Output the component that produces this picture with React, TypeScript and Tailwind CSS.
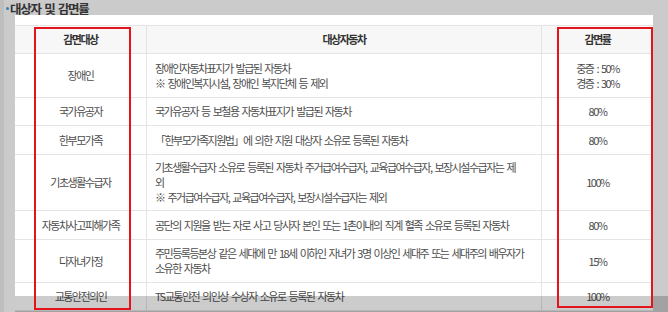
const rows: { target: string; car: string[]; rate: string[]; h: string }[] = [
  {
    target: "장애인",
    car: ["장애인자동차표지가 발급된 자동차", "※ 장애인복지시설, 장애인 복지단체 등 제외"],
    rate: ["중증 : 50%", "경증 : 30%"],
    h: "h-[44px]",
  },
  {
    target: "국가유공자",
    car: ["국가유공자 등 보철용 자동차표지가 발급된 자동차"],
    rate: ["80%"],
    h: "h-[28px]",
  },
  {
    target: "한부모가족",
    car: ["「한부모가족지원법」에 의한 지원 대상자 소유로 등록된 자동차"],
    rate: ["80%"],
    h: "h-[29px]",
  },
  {
    target: "기초생활수급자",
    car: [
      "기초생활수급자 소유로 등록된 자동차 주거급여수급자, 교육급여수급자, 보장시설수급자는 제",
      "외",
      "※ 주거급여수급자, 교육급여수급자, 보장시설수급자는 제외",
    ],
    rate: ["100%"],
    h: "h-[56px]",
  },
  {
    target: "자동차사고피해가족",
    car: ["공단의 지원을 받는 자로 사고 당사자 본인 또는 1촌이내의 직계 혈족 소유로 등록된 자동차"],
    rate: ["80%"],
    h: "h-[29px]",
  },
  {
    target: "다자녀가정",
    car: [
      "주민등록등본상 같은 세대에 만 18세 이하인 자녀가 3명 이상인 세대주 또는 세대주의 배우자가",
      "소유한 자동차",
    ],
    rate: ["15%"],
    h: "h-[43px]",
  },
  {
    target: "교통안전의인",
    car: ["TS교통안전 의인상 수상자 소유로 등록된 자동차"],
    rate: ["100%"],
    h: "h-[28px]",
  },
];

const Lines = ({ items }: { items: string[] }) => (
  <div className="leading-[15px]">
    {items.map((t, i) => (
      <div key={i} className="whitespace-nowrap">
        {t}
      </div>
    ))}
  </div>
);

const App = () => {
  return (
    <div
      className="relative w-[668px] h-[312px] overflow-hidden bg-[#cbcbcb] border-l-4 border-[#bebebe] text-[11px] tracking-[-1.5px] [word-spacing:2px] text-[#4d4d4d]"
      style={{ fontFamily: '"Noto Sans CJK KR", "Noto Sans", sans-serif' }}
    >
      <div className="h-[15px] pt-[2px] flex items-center">
        <span className="w-[6px] h-[3px] flex items-center justify-center">
          <span className="block w-[3px] h-[3px] rounded-full bg-[#2f80c9]" />
        </span>
        <h2 className="text-[12.5px] leading-[13px] font-bold tracking-[-1.3px] text-[#333]">
          대상자 및 감면률
        </h2>
      </div>

      <div className="ml-[11px] w-[638px] bg-white pt-[10px]">
        <div className="grid grid-cols-[132px_395px_111px]">
          <div className="h-[29px] border-y border-r border-[#e4e4e4] bg-[#f7f7f7] flex items-center justify-center font-bold text-[#333]">
            감면대상
          </div>
          <div className="h-[29px] border-y border-r border-[#e4e4e4] bg-[#f7f7f7] flex items-center justify-center font-bold text-[#333]">
            대상자동차
          </div>
          <div className="h-[29px] border-y border-[#e4e4e4] bg-[#f7f7f7] flex items-center justify-center font-bold text-[#333]">
            감면률
          </div>

          {rows.map((r) => (
            <div key={r.target} className="contents">
              <div className={`${r.h} border-b border-r border-[#e4e4e4] flex items-center justify-center`}>
                {r.target}
              </div>
              <div className={`${r.h} border-b border-r border-[#e4e4e4] flex items-center pl-[8px]`}>
                <Lines items={r.car} />
              </div>
              <div className={`${r.h} border-b border-[#e4e4e4] flex items-center justify-center text-center`}>
                <Lines items={r.rate} />
              </div>
            </div>
          ))}
        </div>
      </div>

      {/* screenshot bottom band */}
      <div className="absolute left-[11px] right-0 top-[296px] bottom-0 bg-black/[0.2]" />

      {/* red highlight boxes */}
      <div className="absolute left-[30px] top-[27px] w-[97px] h-[283px] border-[2.5px] border-[#e3141b]" />
      <div className="absolute left-[553px] top-[27px] w-[96px] h-[281px] border-[2.5px] border-[#e3141b]" />
    </div>
  );
};

export default App;
